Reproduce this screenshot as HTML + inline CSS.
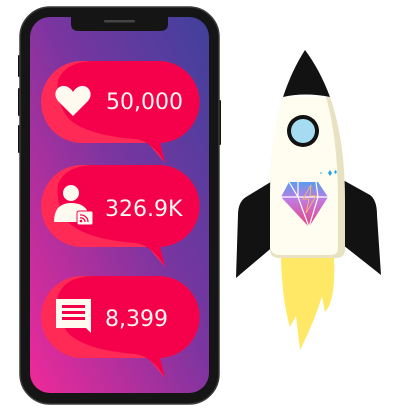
<!DOCTYPE html>
<html><head><style>
html,body{margin:0;padding:0;background:#fff;width:405px;height:411px;overflow:hidden}
svg{display:block}
text{font-family:"DejaVu Sans","Liberation Sans",sans-serif;fill:#fff8ee}
</style></head><body>
<svg width="405" height="411" viewBox="0 0 405 411">
<defs>
<linearGradient id="scr" x1="1" y1="0" x2="0" y2="1">
<stop offset="0" stop-color="#3f419c"/>
<stop offset="0.45" stop-color="#7a35a0"/>
<stop offset="1" stop-color="#f0299a"/>
</linearGradient>
<linearGradient id="dia" x1="0" y1="0" x2="0" y2="1">
<stop offset="0" stop-color="#5c9cf0"/>
<stop offset="0.4" stop-color="#c07ae0"/>
<stop offset="1" stop-color="#e8407a"/>
</linearGradient>
<g id="bub">
<path d="M82 61 H157 A41 41 0 0 1 160 143 L165 163 L148 143 H82 A41 41 0 0 1 82 61 Z" fill="#ff2a55"/>
<path d="M95 61 H157 A41 41 0 0 1 160 143 L165 163 Q152 141 135 139 Q85 135 68 118 Q55 100 58 80 Q66 61 95 61 Z" fill="#f5004a"/>
</g>
</defs>
<!-- phone -->
<rect x="18" y="55" width="4" height="22" rx="1" fill="#111"/>
<rect x="18" y="88" width="4" height="28" rx="1" fill="#111"/>
<rect x="18" y="125" width="4" height="28" rx="1" fill="#111"/>
<rect x="216" y="100" width="5" height="45" rx="1" fill="#111"/>
<rect x="20" y="7" width="199" height="397" rx="30" fill="#151515" stroke="#3a3a3a" stroke-width="1.5"/>
<rect x="30" y="17" width="179" height="376" rx="20" fill="url(#scr)"/>
<path d="M71 17 H168 V24 Q168 31 160 31 H79 Q71 31 71 24 Z" fill="#151515"/>
<rect x="104" y="20" width="31" height="2.5" rx="1.2" fill="#444"/>
<use href="#bub"/>
<use href="#bub" transform="translate(0,104)"/>
<use href="#bub" transform="translate(0,215)"/>
<!-- heart -->
<path d="M73 116 L58 101 Q54 96 56 91 Q59 85 65 86 Q70 87 73 92 Q76 87 81 86 Q87 85 90 91 Q92 96 88 101 Z" fill="#fffaf0"/>
<text x="106" y="109" font-size="22">50,000</text>
<!-- user -->
<circle cx="71" cy="193" r="8" fill="#fffaf0"/>
<path d="M54 222 Q54 203 71 203 Q84 203 88 212 L88 222 Z" fill="#fffaf0"/>
<rect x="77" y="211" width="16" height="14" rx="2" fill="#fffaf0" stroke="#f5004a" stroke-width="1"/>
<path d="M80 215 A7 7 0 0 1 88 222 M80 218 A4 4 0 0 1 85 222" fill="none" stroke="#f5004a" stroke-width="1.2"/>
<circle cx="81" cy="221" r="1.3" fill="#f5004a"/>
<text x="105" y="216" font-size="22">326.9K</text>
<!-- comment -->
<path d="M56 299 H91 V333 L86 328 H56 Z" fill="#fffaf0"/>
<rect x="62" y="305" width="23" height="3" fill="#f5004a"/>
<rect x="62" y="311" width="23" height="3" fill="#f5004a"/>
<rect x="62" y="317" width="23" height="3" fill="#f5004a"/>
<text x="105" y="326" font-size="22">8,399</text>
<!-- rocket flame -->
<path d="M281 258 H334 Q336 300 325 312 L322 296 Q315 320 300 350 L296 316 L290 327 Q282 300 281 258 Z" fill="#ffe866"/>
<!-- fins -->
<path d="M274 180 L246 197 Q238 202 238 215 L236 278 L275 245 Z" fill="#121212"/>
<path d="M343 180 L370 195 Q377 200 377 215 L381 275 L343 245 Z" fill="#121212"/>
<!-- body -->
<path d="M283 97 Q270 140 270 200 V250 Q270 258 280 258 H335 Q345 258 345 250 V200 Q345 140 330 97 Z" fill="#e8e2c2"/>
<path d="M283 97 Q270 140 270 200 V248 Q272 255 280 255 H330 Q338 255 338 248 V200 Q338 140 326 97 Z" fill="#fffdf0"/>
<path d="M305 50 Q320 70 330 97 Q305 92 283 97 Q292 70 305 50 Z" fill="#121212"/>
<circle cx="303" cy="131" r="16" fill="#121212"/>
<circle cx="303" cy="131" r="12" fill="#a5dcf2"/>
<!-- diamond -->
<path d="M289 182 H318 L328 197 L309 227 L281 197 Z" fill="url(#dia)"/>
<path d="M289 182 L298 197 L309 227 L318 197 L316 182 M281 197 H328 M298 182 L298 197" fill="none" stroke="#fff" stroke-width="1.2"/>
<path d="M311 185 L303 199 H309 L306 213 L316 196 H310 Z" fill="none" stroke="#f5b070" stroke-width="1"/>
<path d="M328 173 l2 -3 l2 3 l-2 3 Z M334 172 l1.5 -2 l1.5 2 l-1.5 2 Z" fill="#1ea7e0"/>
<circle cx="321" cy="173" r="0.8" fill="#1ea7e0"/>
</svg>
</body></html>
